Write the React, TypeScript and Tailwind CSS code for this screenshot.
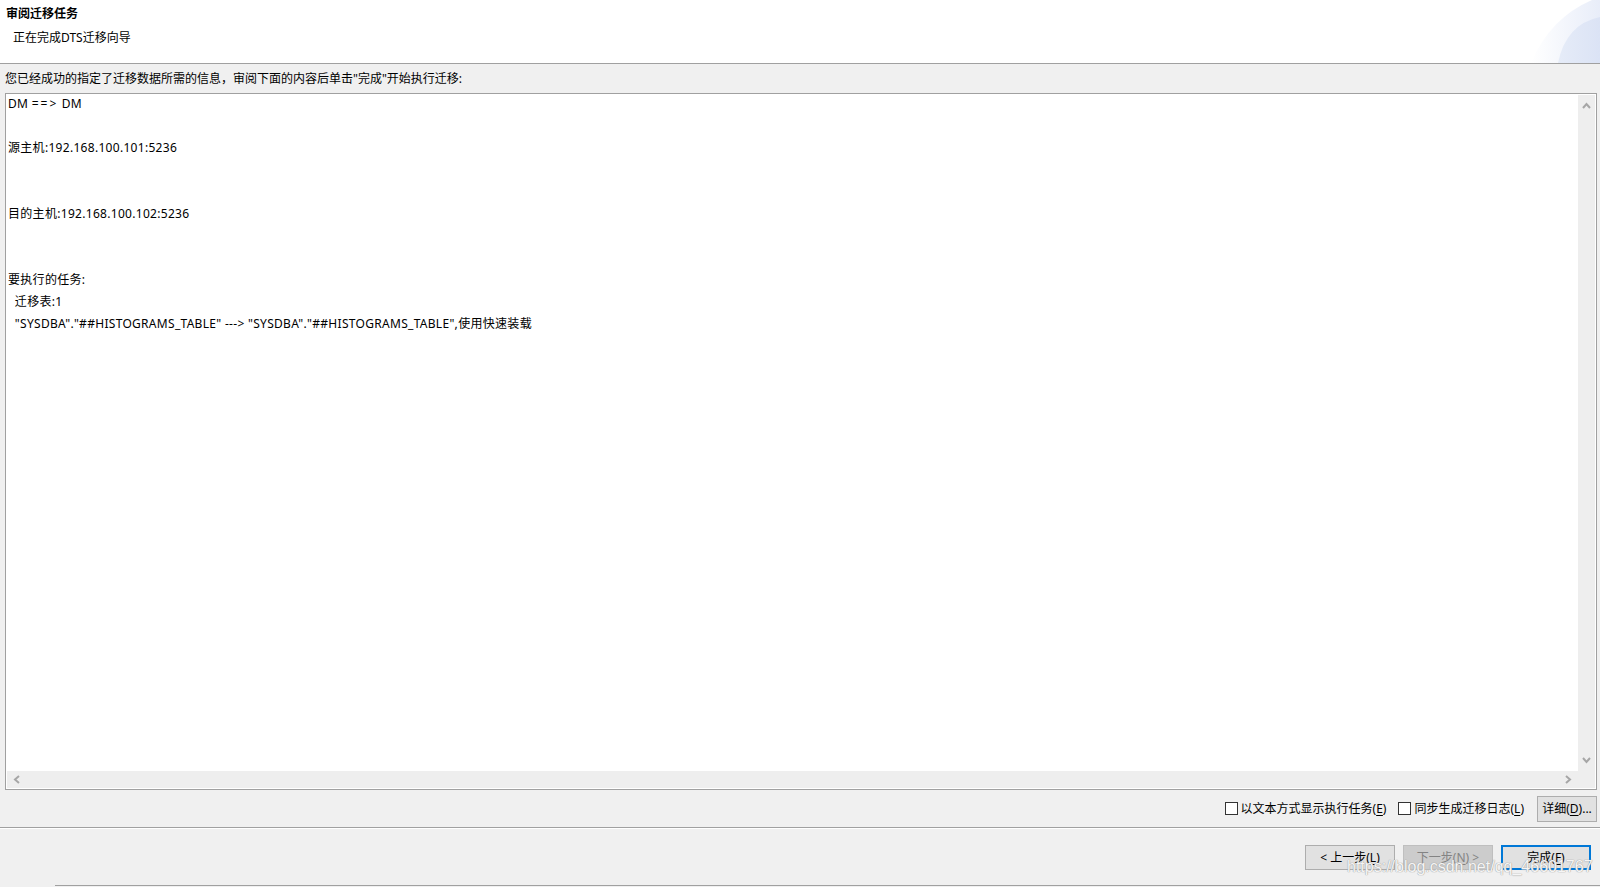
import React from "react";

const FONT = { fontFamily: '"Noto Sans", "Noto Sans CJK SC", sans-serif' };

function Mn({ k }: { k: string }) {
  return <span className="underline underline-offset-2">{k}</span>;
}

function Chevron({ dir }: { dir: "up" | "down" | "left" | "right" }) {
  const rot = { up: 0, right: 90, down: 180, left: 270 }[dir];
  return (
    <svg width="9" height="9" viewBox="0 0 9 9" style={{ transform: `rotate(${rot}deg)` }}>
      <path d="M1 7 L4.5 3 L8 7" fill="none" stroke="#a6a6a6" strokeWidth="2" />
    </svg>
  );
}

function CheckOpt({ label, k }: { label: string; k: string }) {
  return (
    <div className="flex items-center">
      <div className="w-[13px] h-[13px] border border-[#333] bg-white" />
      <span className="ml-[3px] text-[12px] leading-[16px] text-black">
        {label}(<Mn k={k} />)
      </span>
    </div>
  );
}

const lines: string[] = [
  "",
  "源主机:192.168.100.101:5236",
  "",
  "",
  "目的主机:192.168.100.102:5236",
  "",
  "",
  "要执行的任务:",
  "  迁移表:1",
  '  "SYSDBA"."##HISTOGRAMS_TABLE" ---> "SYSDBA"."##HISTOGRAMS_TABLE",使用快速装载',
];

export default function App() {
  return (
    <div className="w-[1600px] h-[887px] bg-[#f0f0f0] relative overflow-hidden flex flex-col text-black" style={FONT}>
      {/* wizard header */}
      <div className="h-[64px] shrink-0 bg-white border-b border-[#a0a0a0] relative">
        <div className="pl-[6px] pt-[5px] text-[12px] leading-[18px] font-bold">审阅迁移任务</div>
        <div className="pl-[13px] pt-[7px] text-[12px] leading-[16px]">正在完成DTS迁移向导</div>
        <svg className="absolute right-0 top-0" width="80" height="63" viewBox="1520 0 80 63">
          <defs>
            <linearGradient id="g1" x1="0" y1="0" x2="1" y2="0">
              <stop offset="0" stopColor="#ffffff" />
              <stop offset="1" stopColor="#e8edf9" />
            </linearGradient>
            <linearGradient id="g2" x1="0" y1="0" x2="1" y2="0">
              <stop offset="0" stopColor="#e6ecf8" />
              <stop offset="1" stopColor="#dbe3f5" />
            </linearGradient>
          </defs>
          <path d="M1531 63 Q1550 18 1592 0 L1600 0 L1600 63 Z" fill="url(#g1)" />
          <path d="M1558 63 Q1566 24 1600 17 L1600 63 Z" fill="url(#g2)" />
        </svg>
      </div>

      {/* description */}
      <div className="h-[29px] shrink-0 pl-[5px] pt-[7px] text-[12px] leading-[16px]">
        您已经成功的指定了迁移数据所需的信息，审阅下面的内容后单击"完成"开始执行迁移:
      </div>

      {/* summary text box */}
      <div className="h-[697px] shrink-0 ml-[5px] mr-[3px] border border-[#a0a0a0] bg-white p-px flex flex-col">
        <div className="flex-1 flex min-h-0">
          <div className="flex-1 pl-px -mt-[2px] text-[12px] leading-[22px] tracking-[0.3px] whitespace-pre">
            <div className="h-[22px]">
              DM <span className="tracking-[2px]">==&gt;</span> DM
            </div>
            {lines.map((l, i) => (
              <div key={i} className="h-[22px]">{l}</div>
            ))}
          </div>
          <div className="w-[17px] bg-[#eeeeee] flex flex-col items-center justify-between py-[6px]">
            <Chevron dir="up" />
            <Chevron dir="down" />
          </div>
        </div>
        <div className="h-[17px] bg-[#eeeeee] flex items-center justify-between pl-[5px] pr-[22px]">
          <Chevron dir="left" />
          <Chevron dir="right" />
        </div>
      </div>

      {/* options row */}
      <div className="h-[37px] shrink-0 flex items-center justify-end pr-[3px]">
        <CheckOpt label="以文本方式显示执行任务" k="E" />
        <div className="w-[12px]" />
        <CheckOpt label="同步生成迁移日志" k="L" />
        <div className="w-[13px]" />
        <button className="w-[60px] h-[26px] bg-[#e1e1e1] border border-[#adadad] text-[12px] leading-[16px]">
          详细(<Mn k="D" />)...
        </button>
      </div>

      {/* separator */}
      <div className="h-px shrink-0 bg-[#a0a0a0]" />
      <div className="h-px shrink-0 bg-white" />

      {/* navigation buttons */}
      <div className="h-[56px] shrink-0 flex justify-end items-start pt-[16px] pr-[9px] gap-[8px]">
        <button className="w-[90px] h-[25px] bg-[#e1e1e1] border border-[#adadad] text-[12px] leading-[16px]">
          &lt; 上一步(<Mn k="L" />)
        </button>
        <button className="w-[90px] h-[25px] bg-[#cccccc] border border-[#bfbfbf] text-[12px] leading-[16px] text-[#838383]">
          下一步(<Mn k="N" />) &gt;
        </button>
        <button className="w-[90px] h-[25px] bg-[#e1e1e1] border-2 border-[#0078d7] text-[12px] leading-[16px]">
          完成(<Mn k="F" />)
        </button>
      </div>

      <div className="h-px shrink-0 ml-[55px] bg-[#a0a0a0]" />
      <div className="h-px shrink-0" />

      {/* watermark */}
      <div
        className="absolute left-[1347px] top-[858px] text-[16px] leading-[18px] text-white/90 whitespace-nowrap"
        style={{ fontFamily: '"Liberation Sans", Arial, sans-serif', textShadow: "0 0 1px #9a9a9a, 0 0 1px #9a9a9a" }}
      >
        https://blog.csdn.net/qq_46601767
      </div>
    </div>
  );
}
